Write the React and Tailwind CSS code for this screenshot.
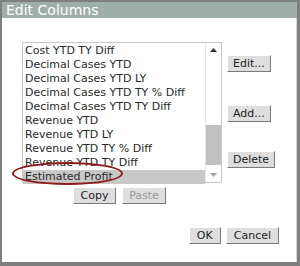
import React from 'react';

const items = [
  'Cost YTD TY Diff',
  'Decimal Cases YTD',
  'Decimal Cases YTD LY',
  'Decimal Cases YTD TY % Diff',
  'Decimal Cases YTD TY Diff',
  'Revenue YTD',
  'Revenue YTD LY',
  'Revenue YTD TY % Diff',
  'Revenue YTD TY Diff',
  'Estimated Profit',
];

const Btn = ({ children, disabled, className = '' }) => (
  <button
    className={`h-[17px] px-[5px] bg-[#dedede] border border-t-white border-l-white border-r-[#7a7a7a] border-b-[#7a7a7a] text-[11px] leading-none ${disabled ? 'text-[#9a9a9a]' : 'text-[#222]'} ${className}`}
  >
    {children}
  </button>
);

const App = () => {
  return (
    <div className="w-[300px] h-[266px] bg-[#7f7f7f] pl-[2px] pt-[2px] pr-[3px] pb-[4px]" style={{ fontFamily: '"DejaVu Sans", Verdana, sans-serif' }}>
      <div className="h-[16px] bg-[#a0aeaa] text-white text-[14px] leading-[16px] pl-[4px]">Edit Columns</div>
      <div className="bg-white h-[244px] border-r border-[#d8d8d8] pt-[24px] pl-[20px]">
        <div className="flex">
          <div className="relative">
            <div className="w-[200px] h-[141px] border border-[#c8c8c8] flex">
              <div className="flex-1 pt-[1px]">
                {items.map((t, i) => (
                  <div
                    key={t}
                    className={`h-[14px] leading-[14px] pl-[2px] text-[11px] text-[#2a2a2a] whitespace-nowrap ${i === items.length - 1 ? 'bg-[#c8c8c8]' : ''}`}
                  >
                    {t}
                  </div>
                ))}
              </div>
              <div className="w-[16px] flex flex-col items-center border-l border-[#e8e8e8]">
                <div className="h-[14px] flex items-center justify-center">
                  <svg width="7" height="4" viewBox="0 0 7 4"><path d="M0 4 L3.5 0 L7 4 Z" fill="#333" /></svg>
                </div>
                <div className="flex-1 w-full flex flex-col">
                  <div className="h-[68px]" />
                  <div className="h-[40px] bg-[#c0c0c0]" />
                </div>
                <div className="h-[14px] flex items-center justify-center">
                  <svg width="7" height="4" viewBox="0 0 7 4"><path d="M0 0 L3.5 4 L7 0 Z" fill="#a0a0a0" /></svg>
                </div>
              </div>
            </div>
            <div className="absolute left-[-10px] top-[120px] w-[111px] h-[23px] rounded-[50%] border-2 border-[#8e1a1a]" />
          </div>
          <div className="flex flex-col items-start pl-[5px] pt-[13px]">
            <Btn>Edit...</Btn>
            <Btn className="mt-[33px]">Add...</Btn>
            <Btn className="mt-[29px]">Delete</Btn>
          </div>
        </div>
        <div className="flex gap-[6px] pl-[51px] mt-[4px]">
          <Btn className="px-[6px] w-[43px]">Copy</Btn>
          <Btn disabled className="w-[44px]">Paste</Btn>
        </div>
        <div className="flex justify-end gap-[5px] pr-[17px] mt-[23px]">
          <Btn className="w-[32px]">OK</Btn>
          <Btn className="px-[7px]">Cancel</Btn>
        </div>
      </div>
    </div>
  );
};

export default App;
